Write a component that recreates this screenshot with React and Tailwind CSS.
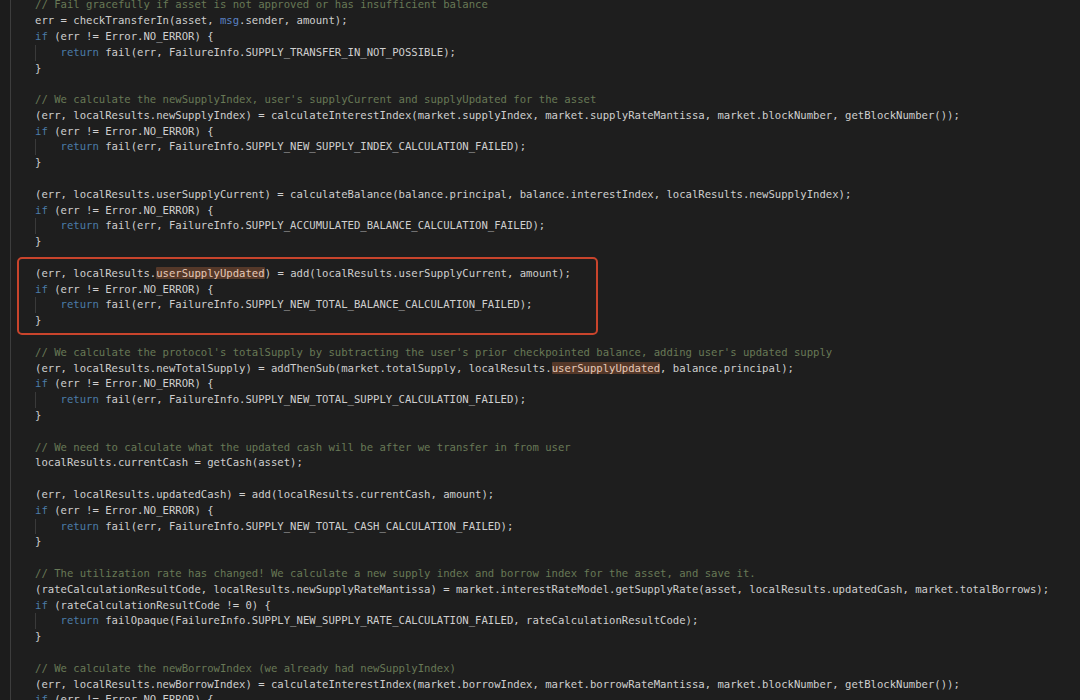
import React from 'react';

// «...» marks the word-highlight the editor put on the selected symbol
const LINES = [
  '// Fail gracefully if asset is not approved or has insufficient balance',
  'err = checkTransferIn(asset, msg.sender, amount);',
  'if (err != Error.NO_ERROR) {',
  '    return fail(err, FailureInfo.SUPPLY_TRANSFER_IN_NOT_POSSIBLE);',
  '}',
  '',
  "// We calculate the newSupplyIndex, user's supplyCurrent and supplyUpdated for the asset",
  '(err, localResults.newSupplyIndex) = calculateInterestIndex(market.supplyIndex, market.supplyRateMantissa, market.blockNumber, getBlockNumber());',
  'if (err != Error.NO_ERROR) {',
  '    return fail(err, FailureInfo.SUPPLY_NEW_SUPPLY_INDEX_CALCULATION_FAILED);',
  '}',
  '',
  '(err, localResults.userSupplyCurrent) = calculateBalance(balance.principal, balance.interestIndex, localResults.newSupplyIndex);',
  'if (err != Error.NO_ERROR) {',
  '    return fail(err, FailureInfo.SUPPLY_ACCUMULATED_BALANCE_CALCULATION_FAILED);',
  '}',
  '',
  '(err, localResults.«userSupplyUpdated») = add(localResults.userSupplyCurrent, amount);',
  'if (err != Error.NO_ERROR) {',
  '    return fail(err, FailureInfo.SUPPLY_NEW_TOTAL_BALANCE_CALCULATION_FAILED);',
  '}',
  '',
  "// We calculate the protocol's totalSupply by subtracting the user's prior checkpointed balance, adding user's updated supply",
  '(err, localResults.newTotalSupply) = addThenSub(market.totalSupply, localResults.«userSupplyUpdated», balance.principal);',
  'if (err != Error.NO_ERROR) {',
  '    return fail(err, FailureInfo.SUPPLY_NEW_TOTAL_SUPPLY_CALCULATION_FAILED);',
  '}',
  '',
  '// We need to calculate what the updated cash will be after we transfer in from user',
  'localResults.currentCash = getCash(asset);',
  '',
  '(err, localResults.updatedCash) = add(localResults.currentCash, amount);',
  'if (err != Error.NO_ERROR) {',
  '    return fail(err, FailureInfo.SUPPLY_NEW_TOTAL_CASH_CALCULATION_FAILED);',
  '}',
  '',
  '// The utilization rate has changed! We calculate a new supply index and borrow index for the asset, and save it.',
  '(rateCalculationResultCode, localResults.newSupplyRateMantissa) = market.interestRateModel.getSupplyRate(asset, localResults.updatedCash, market.totalBorrows);',
  'if (rateCalculationResultCode != 0) {',
  '    return failOpaque(FailureInfo.SUPPLY_NEW_SUPPLY_RATE_CALCULATION_FAILED, rateCalculationResultCode);',
  '}',
  '',
  '// We calculate the newBorrowIndex (we already had newSupplyIndex)',
  '(err, localResults.newBorrowIndex) = calculateInterestIndex(market.borrowIndex, market.borrowRateMantissa, market.blockNumber, getBlockNumber());',
  'if (err != Error.NO_ERROR) {',
];

const KEYWORDS = ['if', 'return'];

function Tokens({ text }) {
  const parts = text.split(/(«[^»]+»|\b(?:if|return|msg)\b)/g).filter(Boolean);
  return parts.map((p, i) => {
    if (p.startsWith('«')) {
      return (
        <span key={i} className="bg-[#553829] text-[#e6c9b8] rounded-[1px]">
          {p.slice(1, -1)}
        </span>
      );
    }
    if (KEYWORDS.includes(p)) return <span key={i} className="text-[#4b7ca8]">{p}</span>;
    if (p === 'msg') return <span key={i} className="text-[#5a82c4]">{p}</span>;
    return <span key={i}>{p}</span>;
  });
}

function CodeLine({ text }) {
  if (text.startsWith('//')) {
    return <div className="h-[15.8px] leading-[15.8px] text-[#687956]">{text}</div>;
  }
  if (text.startsWith('    ')) {
    return (
      <div className="h-[15.8px] leading-[15.8px]">
        <span className="inline-block w-[25.5px] h-[15.8px] align-top shadow-[inset_1px_0_0_#3a3a3a]" />
        <Tokens text={text.slice(4)} />
      </div>
    );
  }
  return (
    <div className="h-[15.8px] leading-[15.8px]">
      <Tokens text={text} />
    </div>
  );
}

export default function App() {
  return (
    <div className="relative w-[1080px] h-[700px] overflow-hidden bg-[#1e1e1e] flex">
      {/* gutter edge */}
      <div className="w-[10px] shrink-0 bg-[#1c1c1c]" />
      <div className="w-[1px] shrink-0 bg-[#3d3d3d]" />

      {/* code */}
      <div
        className="pl-[24px] mt-[-2.7px] whitespace-pre text-[10.6px] text-[#cfcfcf]"
        style={{ fontFamily: '"DejaVu Sans Mono", "Liberation Mono", monospace' }}
      >
        {LINES.map((l, i) => (
          <CodeLine key={i} text={l} />
        ))}
      </div>

      {/* red annotation box */}
      <div className="absolute left-[17px] top-[257px] w-[581px] h-[78px] rounded-[5px] border-2 border-[#c9442c] pointer-events-none" />
    </div>
  );
}
